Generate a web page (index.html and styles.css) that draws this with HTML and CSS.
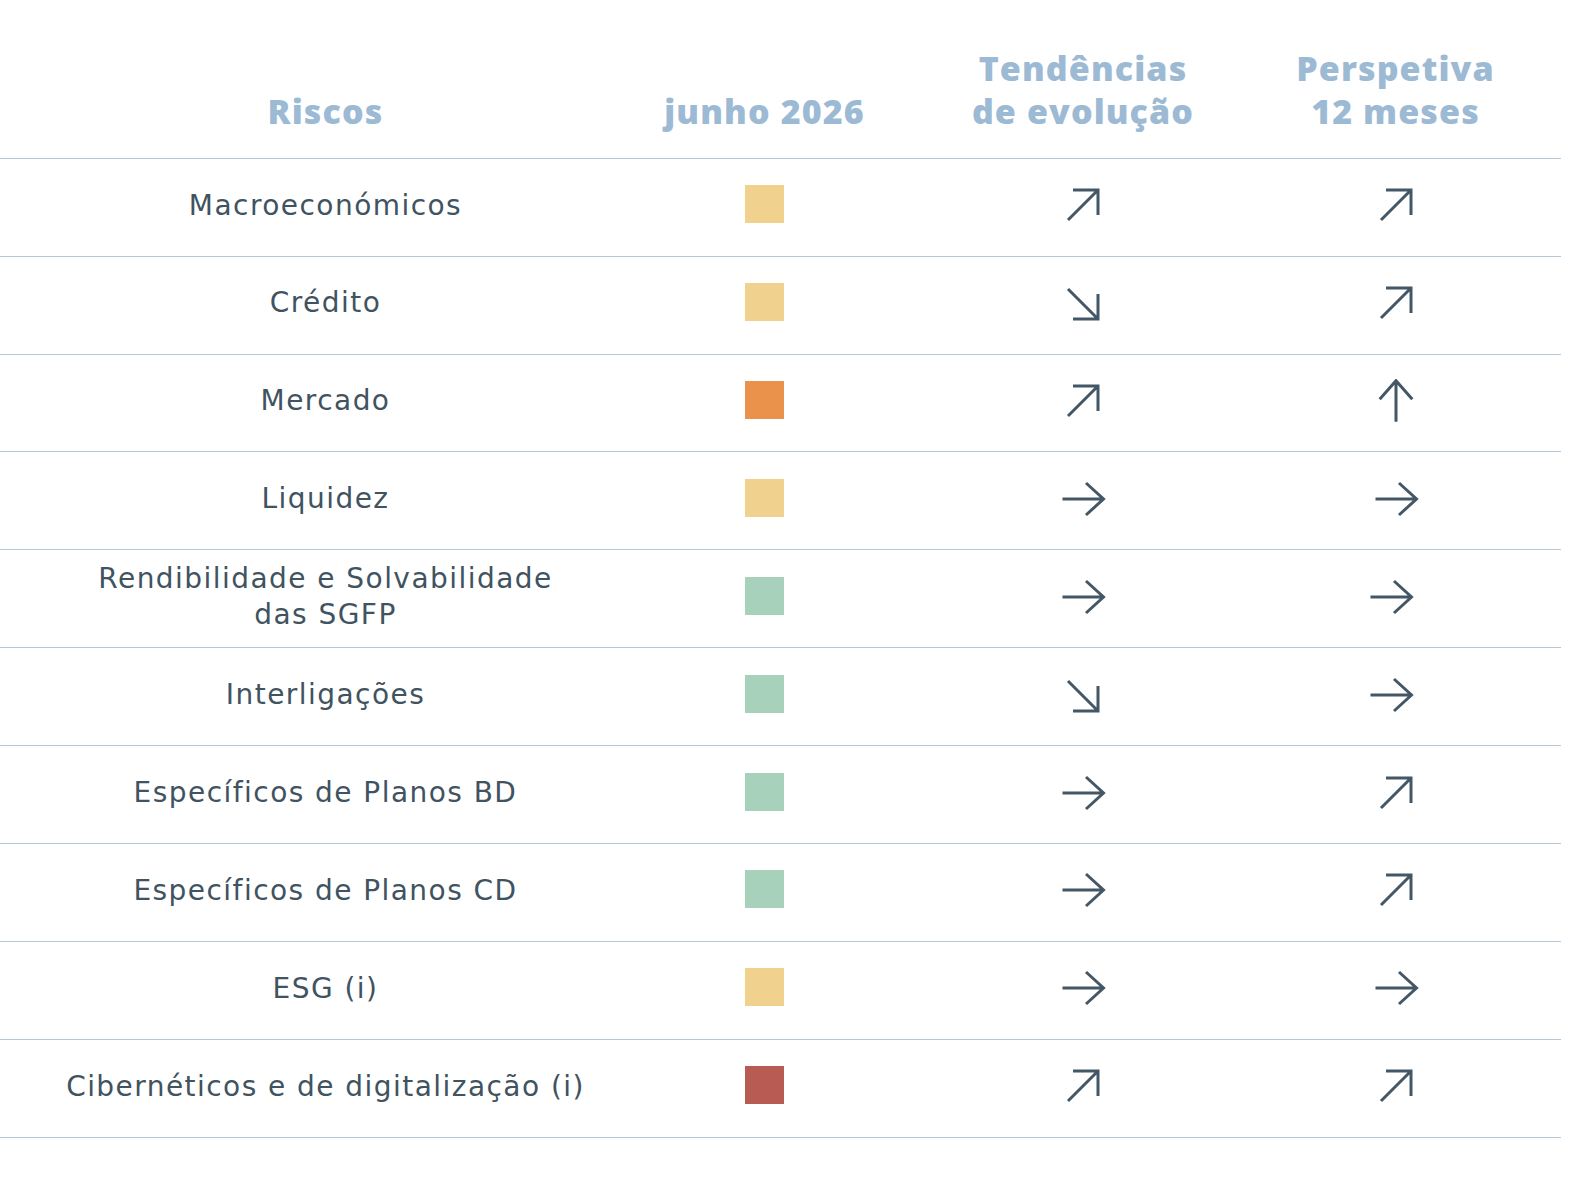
FILE: index.html
```html
<!DOCTYPE html>
<html lang="pt">
<head>
<meta charset="utf-8">
<title>Riscos</title>
<link rel="stylesheet" href="styles.css">
</head>
<body>
<svg width="0" height="0" class="defs" aria-hidden="true">
  <defs>
    <g id="ne"><path d="M9 37 L39 7 M14 7 H39 V32"/></g>
    <g id="se"><path d="M9 8 L39 38 M14 38 H39 V13"/></g>
    <g id="right"><path d="M3.5 22 H44.5 M27 6 L44.5 22 L27 38"/></g>
    <g id="up"><path d="M24 1.7 V42.7 M7.7 20.3 L24 1.7 L40.3 20.3"/></g>
  </defs>
</svg>
<div class="table">
  <div class="row head">
    <div class="cell c1">Riscos</div>
    <div class="cell c2">junho 2026</div>
    <div class="cell c3">Tendências<br>de evolução</div>
    <div class="cell c4">Perspetiva<br>12 meses</div>
  </div>

  <div class="row">
    <div class="cell c1">Macroeconómicos</div>
    <div class="cell c2"><span class="sq yellow"></span></div>
    <div class="cell c3"><svg class="arr" viewBox="0 0 48 48"><use href="#ne"/></svg></div>
    <div class="cell c4"><svg class="arr" viewBox="0 0 48 48"><use href="#ne"/></svg></div>
  </div>
  <div class="row">
    <div class="cell c1">Crédito</div>
    <div class="cell c2"><span class="sq yellow"></span></div>
    <div class="cell c3"><svg class="arr" viewBox="0 0 48 48"><use href="#se"/></svg></div>
    <div class="cell c4"><svg class="arr" viewBox="0 0 48 48"><use href="#ne"/></svg></div>
  </div>
  <div class="row">
    <div class="cell c1">Mercado</div>
    <div class="cell c2"><span class="sq orange"></span></div>
    <div class="cell c3"><svg class="arr" viewBox="0 0 48 48"><use href="#ne"/></svg></div>
    <div class="cell c4"><svg class="arr" viewBox="0 0 48 48"><use href="#up"/></svg></div>
  </div>
  <div class="row">
    <div class="cell c1">Liquidez</div>
    <div class="cell c2"><span class="sq yellow"></span></div>
    <div class="cell c3"><svg class="arr" viewBox="0 0 48 48"><use href="#right"/></svg></div>
    <div class="cell c4"><svg class="arr" viewBox="0 0 48 48"><use href="#right"/></svg></div>
  </div>
  <div class="row">
    <div class="cell c1">Rendibilidade e Solvabilidade<br>das SGFP</div>
    <div class="cell c2"><span class="sq green"></span></div>
    <div class="cell c3"><svg class="arr" viewBox="0 0 48 48"><use href="#right"/></svg></div>
    <div class="cell c4"><svg class="arr shift" viewBox="0 0 48 48"><use href="#right"/></svg></div>
  </div>
  <div class="row">
    <div class="cell c1">Interligações</div>
    <div class="cell c2"><span class="sq green"></span></div>
    <div class="cell c3"><svg class="arr" viewBox="0 0 48 48"><use href="#se"/></svg></div>
    <div class="cell c4"><svg class="arr shift" viewBox="0 0 48 48"><use href="#right"/></svg></div>
  </div>
  <div class="row">
    <div class="cell c1">Específicos de Planos BD</div>
    <div class="cell c2"><span class="sq green"></span></div>
    <div class="cell c3"><svg class="arr" viewBox="0 0 48 48"><use href="#right"/></svg></div>
    <div class="cell c4"><svg class="arr" viewBox="0 0 48 48"><use href="#ne"/></svg></div>
  </div>
  <div class="row">
    <div class="cell c1">Específicos de Planos CD</div>
    <div class="cell c2"><span class="sq green"></span></div>
    <div class="cell c3"><svg class="arr" viewBox="0 0 48 48"><use href="#right"/></svg></div>
    <div class="cell c4"><svg class="arr" viewBox="0 0 48 48"><use href="#ne"/></svg></div>
  </div>
  <div class="row">
    <div class="cell c1">ESG (i)</div>
    <div class="cell c2"><span class="sq yellow"></span></div>
    <div class="cell c3"><svg class="arr" viewBox="0 0 48 48"><use href="#right"/></svg></div>
    <div class="cell c4"><svg class="arr" viewBox="0 0 48 48"><use href="#right"/></svg></div>
  </div>
  <div class="row">
    <div class="cell c1">Cibernéticos e de digitalização (i)</div>
    <div class="cell c2"><span class="sq red"></span></div>
    <div class="cell c3"><svg class="arr" viewBox="0 0 48 48"><use href="#ne"/></svg></div>
    <div class="cell c4"><svg class="arr" viewBox="0 0 48 48"><use href="#ne"/></svg></div>
  </div>
</div>
</body>
</html>
```

FILE: styles.css
```css
html, body {
  margin: 0;
  padding: 0;
  background: #ffffff;
}

body {
  font-family: "DejaVu Sans", "Open Sans", sans-serif;
  color: #3f5361;
}

.defs {
  position: absolute;
  width: 0;
  height: 0;
  overflow: hidden;
}

.table {
  width: 1561px;
}

.row {
  display: grid;
  grid-template-columns: 651px 227px 410px 215px;
  height: 97.9px;
  box-sizing: border-box;
  border-bottom: 1.5px solid #b3c8d9;
}

.row.head {
  height: 158.8px;
  padding-bottom: 25px;
}

.cell {
  display: flex;
  align-items: center;
  justify-content: center;
  text-align: center;
  font-size: 28px;
  line-height: 36.3px;
  letter-spacing: 1.45px;
}

.row:not(.head) .c1 {
  padding-bottom: 3px;
}

.head .cell {
  align-items: flex-end;
  font-family: "Open Sans", "DejaVu Sans", sans-serif;
  font-weight: 800;
  font-size: 34px;
  line-height: 43px;
  letter-spacing: 1.1px;
  color: #9dbad4;
}

.sq {
  display: block;
  width: 39px;
  height: 38px;
  margin-bottom: 6px;
}

.yellow { background: #f1d18e; }
.orange { background: #ea914b; }
.green  { background: #a8d1bc; }
.red    { background: #b85b52; }

.arr {
  width: 48px;
  height: 48px;
  fill: none;
  stroke: #435766;
  stroke-width: 3;
  stroke-miterlimit: 10;
}

.arr.shift {
  margin-right: 10px;
}
```
